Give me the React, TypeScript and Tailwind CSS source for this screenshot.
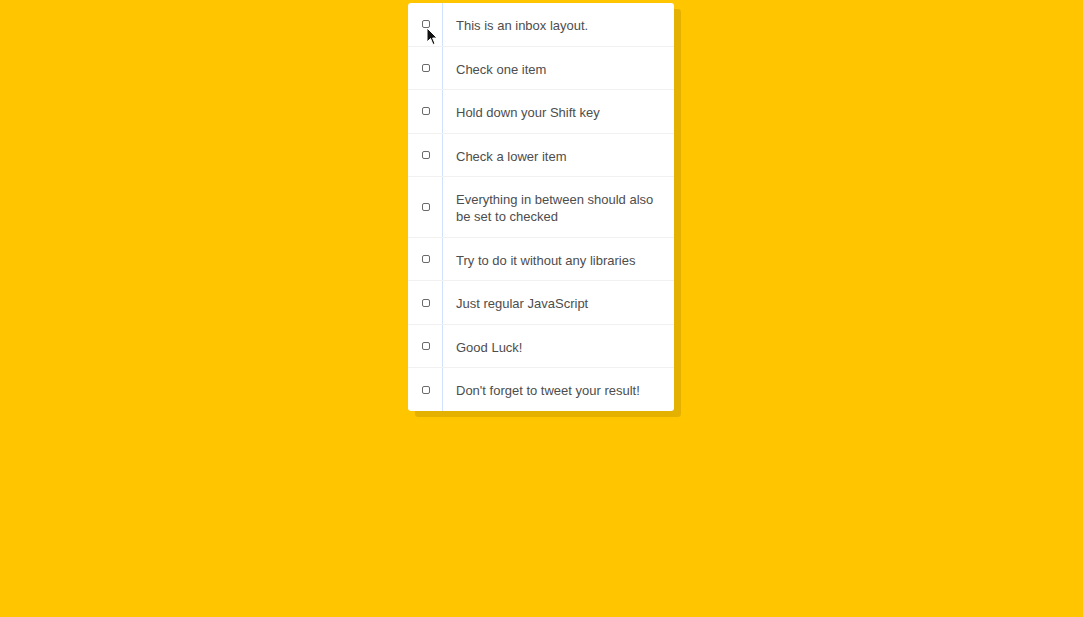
import React from "react";

const items = [
  "This is an inbox layout.",
  "Check one item",
  "Hold down your Shift key",
  "Check a lower item",
  "Everything in between should also be set to checked",
  "Try to do it without any libraries",
  "Just regular JavaScript",
  "Good Luck!",
  "Don't forget to tweet your result!",
];

export default function App() {
  return (
    <div
      className="w-full h-[617px] bg-[#ffc600] pt-[3px] pr-[1px]"
      style={{ fontFamily: '"Liberation Sans", Arial, sans-serif' }}
    >
      <div className="relative mx-auto w-[266px] bg-white rounded-[3px] shadow-[7px_6px_0_rgba(0,0,0,0.1)]">
        {items.map((t, i) => (
          <div
            key={i}
            className={`relative flex items-center ${i < items.length - 1 ? "border-b border-[#f1f1f1]" : ""}`}
          >
            <div className="w-[34px] flex justify-center pl-[1px]">
              <span className="block w-[8px] h-[8px] border border-[#6a6a6a] rounded-[2px] bg-white" />
            </div>
            <p className="flex-1 m-0 border-l border-[#d1e2ff] pl-[13px] pr-[12px] pt-[14px] pb-[11.56px] text-[13px] leading-[17px] text-[#4d4d4d] font-light">
              {t}
            </p>
            {i === 0 && (
              <svg
                className="absolute left-[18px] top-[24px]"
                width="12"
                height="19"
                viewBox="0 0 12 19"
              >
                <path
                  d="M1 1 L1 15 L4.5 11.5 L7 17.5 L9 16.6 L6.6 11 L11 11 Z"
                  fill="#111"
                  stroke="#fff"
                  strokeWidth="1"
                  strokeLinejoin="round"
                />
              </svg>
            )}
          </div>
        ))}
      </div>
    </div>
  );
}
